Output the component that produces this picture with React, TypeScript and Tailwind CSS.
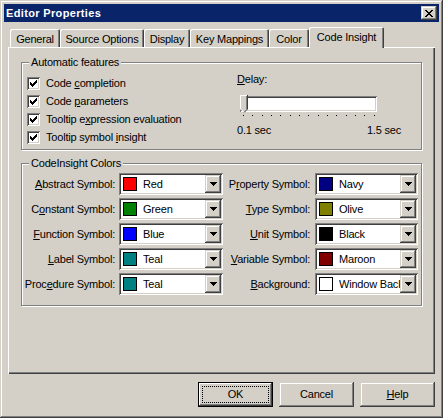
import React from 'react';

// Win2000 3D edges
const RAISED = 'shadow-[inset_-1px_-1px_#404040,inset_1px_1px_#d4d0c8,inset_-2px_-2px_#808080,inset_2px_2px_#fff]';
const SUNKEN = 'shadow-[inset_1px_1px_#808080,inset_-1px_-1px_#fff,inset_2px_2px_#404040,inset_-2px_-2px_#d4d0c8]';
const TAB = 'shadow-[inset_1px_1px_#fff,inset_-1px_0_#404040,inset_-2px_0_#808080]';

const tabs = [
    { label: 'General', w: 'w-[50px]' },
    { label: 'Source Options', w: 'w-[84px]' },
    { label: 'Display', w: 'w-[46px]' },
    { label: 'Key Mappings', w: 'w-[79px]' },
    { label: 'Color', w: 'w-[40px]' },
];

const leftColors = [
    { pre: '', key: 'A', post: 'bstract Symbol:', name: 'Red', swatch: 'bg-[#ff0000]' },
    { pre: 'C', key: 'o', post: 'nstant Symbol:', name: 'Green', swatch: 'bg-[#008000]' },
    { pre: '', key: 'F', post: 'unction Symbol:', name: 'Blue', swatch: 'bg-[#0000ff]' },
    { pre: '', key: 'L', post: 'abel Symbol:', name: 'Teal', swatch: 'bg-[#008080]' },
    { pre: 'Proc', key: 'e', post: 'dure Symbol:', name: 'Teal', swatch: 'bg-[#008080]' },
];

const rightColors = [
    { pre: 'P', key: 'r', post: 'operty Symbol:', name: 'Navy', swatch: 'bg-[#000080]' },
    { pre: '', key: 'T', post: 'ype Symbol:', name: 'Olive', swatch: 'bg-[#808000]' },
    { pre: '', key: 'U', post: 'nit Symbol:', name: 'Black', swatch: 'bg-[#000000]' },
    { pre: '', key: 'V', post: 'ariable Symbol:', name: 'Maroon', swatch: 'bg-[#800000]' },
    { pre: '', key: 'B', post: 'ackground:', name: 'Window Background', swatch: 'bg-[#ffffff]' },
];

function U({ children }: { children: React.ReactNode }) {
    return <span className="underline decoration-1 underline-offset-[1px]">{children}</span>;
}

function Check() {
    return (
        <span className={`w-[13px] h-[13px] shrink-0 bg-white flex items-center justify-center ${SUNKEN}`}>
            <svg width="7" height="7" viewBox="0 0 7 7" shapeRendering="crispEdges">
                <path d="M6 0h1v1h-1z M5 1h2v1h-2z M0 2h1v1h-1z M4 2h3v1h-3z M0 3h2v1h-2z M3 3h3v1h-3z M0 4h5v1h-5z M1 5h3v1h-3z M2 6h1v1h-1z" fill="#000" />
            </svg>
        </span>
    );
}

function DropButton() {
    return (
        <span className={`w-[16px] h-[18px] shrink-0 bg-[#d4d0c8] flex items-center justify-center ${RAISED}`}>
            <svg width="7" height="4" viewBox="0 0 7 4" shapeRendering="crispEdges">
                <path d="M0 0h7v1h-7z M1 1h5v1h-5z M2 2h3v1h-3z M3 3h1v1h-1z" fill="#000" />
            </svg>
        </span>
    );
}

function ColorCombo({ name, swatch, w }: { name: string; swatch: string; w: string }) {
    return (
        <div className={`${w} h-[22px] bg-white p-[2px] flex items-center ${SUNKEN}`}>
            <span className={`ml-[2px] w-[14px] h-[14px] shrink-0 border border-black ${swatch}`} />
            <span className="ml-[6px] flex-1 min-w-0 overflow-hidden whitespace-nowrap">{name}</span>
            <DropButton />
        </div>
    );
}

function GroupBox({ title, className, children }: { title: string; className: string; children: React.ReactNode }) {
    return (
        <div className={`relative border border-[#808080] shadow-[inset_1px_1px_#fff,1px_1px_#fff] ${className}`}>
            <span className="absolute -top-[7px] left-[7px] px-[2px] leading-[13px] bg-[#d4d0c8]">{title}</span>
            {children}
        </div>
    );
}

export default function App() {
    const checks = [
        <>Code <U>c</U>ompletion</>,
        <>Code <U>p</U>arameters</>,
        <>Tooltip e<U>x</U>pression evaluation</>,
        <>Tooltip symbol <U>i</U>nsight</>,
    ];

    return (
        <div className={`w-[443px] h-[418px] p-[4px] flex flex-col bg-[#d4d0c8] text-black text-[11px] leading-[13px] tracking-[-0.2px] font-['Liberation_Sans',Arial,sans-serif] ${RAISED}`}>
            {/* Title bar */}
            <div className="h-[18px] shrink-0 bg-[#0a246a] flex items-center pl-[2px] pr-[2px]">
                <span className="flex-1 text-white font-bold tracking-[0.35px]">Editor Properties</span>
                <span className={`w-[16px] h-[14px] bg-[#d4d0c8] flex items-center justify-center ${RAISED}`}>
                    <svg width="8" height="7" viewBox="0 0 8 7" shapeRendering="crispEdges">
                        <path d="M0 0h2v1h-2z M6 0h2v1h-2z M1 1h2v1h-2z M5 1h2v1h-2z M2 2h4v1h-4z M3 3h2v1h-2z M2 4h4v1h-4z M1 5h2v1h-2z M5 5h2v1h-2z M0 6h2v1h-2z M6 6h2v1h-2z" fill="#000" />
                    </svg>
                </span>
            </div>

            {/* Tabs */}
            <div className="mt-[5px] h-[20px] shrink-0 flex items-end pl-[6px]">
                {tabs.map((t) => (
                    <div key={t.label} className={`${t.w} h-[18px] pt-[2px] rounded-t-[2px] flex items-center justify-center bg-[#d4d0c8] ${TAB}`}>
                        {t.label}
                    </div>
                ))}
                <div className={`relative z-10 w-[75px] h-[21px] -mb-[1px] pb-[1px] rounded-t-[2px] flex items-center justify-center bg-[#d4d0c8] ${TAB}`}>
                    Code Insight
                </div>
            </div>

            {/* Page */}
            <div className={`mx-[4px] h-[327px] shrink-0 pt-[15px] px-[13px] flex flex-col bg-[#d4d0c8] shadow-[inset_1px_1px_#fff,inset_-1px_-1px_#404040,inset_-2px_-2px_#808080]`}>
                <GroupBox title="Automatic features" className="h-[88px] flex">
                    <div className="w-[215px] pl-[5px] pt-[11px] flex flex-col">
                        {checks.map((c, i) => (
                            <div key={i} className="h-[18px] flex items-center gap-[6px]">
                                <Check />
                                <span>{c}</span>
                            </div>
                        ))}
                    </div>
                    <div className="pt-[10px] flex flex-col">
                        <span><U>D</U>elay:</span>
                        <div className={`relative mt-[10px] ml-[3px] w-[137px] h-[16px] bg-white ${SUNKEN}`}>
                            <svg className="absolute left-0 -top-[1px]" width="8" height="19" viewBox="0 0 8 19" shapeRendering="crispEdges">
                                <path d="M0 0H8V14L4 18L0 14Z" fill="#d4d0c8" />
                                <path d="M0.5 14V0.5H7" stroke="#fff" fill="none" />
                                <path d="M0.5 14L4 17.5" stroke="#fff" fill="none" shapeRendering="auto" />
                                <path d="M7.5 0V14" stroke="#404040" fill="none" />
                                <path d="M7.5 14L4 17.5" stroke="#404040" fill="none" shapeRendering="auto" />
                                <path d="M6.5 1V14" stroke="#808080" fill="none" />
                            </svg>
                        </div>
                        <div className="mt-[3px] ml-[6px] w-[132px] h-[1px] flex justify-between">
                            {Array.from({ length: 15 }).map((_, i) => (
                                <span key={i} className="w-[1px] h-[1px] bg-black" />
                            ))}
                        </div>
                        <div className="mt-[8px] w-[164px] flex justify-between">
                            <span>0.1 sec</span>
                            <span>1.5 sec</span>
                        </div>
                    </div>
                </GroupBox>

                <GroupBox title="CodeInsight Colors" className="mt-[13px] h-[143px] pt-[9px] flex flex-col gap-[3px]">
                    {leftColors.map((l, i) => {
                        const r = rightColors[i];
                        return (
                            <div key={i} className="h-[22px] flex items-center">
                                <span className="w-[93px] text-right whitespace-nowrap">
                                    {l.pre}<U>{l.key}</U>{l.post}
                                </span>
                                <div className="ml-[4px]">
                                    <ColorCombo name={l.name} swatch={l.swatch} w="w-[104px]" />
                                </div>
                                <span className="w-[87px] text-right whitespace-nowrap">
                                    {r.pre}<U>{r.key}</U>{r.post}
                                </span>
                                <div className="ml-[5px]">
                                    <ColorCombo name={r.name} swatch={r.swatch} w="w-[103px]" />
                                </div>
                            </div>
                        );
                    })}
                </GroupBox>
            </div>

            {/* Buttons */}
            <div className="mt-[8px] pr-[4px] flex justify-end gap-[6px]">
                <button className="w-[75px] h-[25px] border border-black bg-[#d4d0c8] shadow-[inset_-1px_-1px_#404040,inset_1px_1px_#fff,inset_-2px_-2px_#808080] outline-1 outline-dotted outline-black outline-offset-[-5px]">
                    OK
                </button>
                <button className={`w-[75px] h-[25px] bg-[#d4d0c8] ${RAISED}`}>Cancel</button>
                <button className={`w-[75px] h-[25px] bg-[#d4d0c8] ${RAISED}`}>
                    <U>H</U>elp
                </button>
            </div>
        </div>
    );
}
